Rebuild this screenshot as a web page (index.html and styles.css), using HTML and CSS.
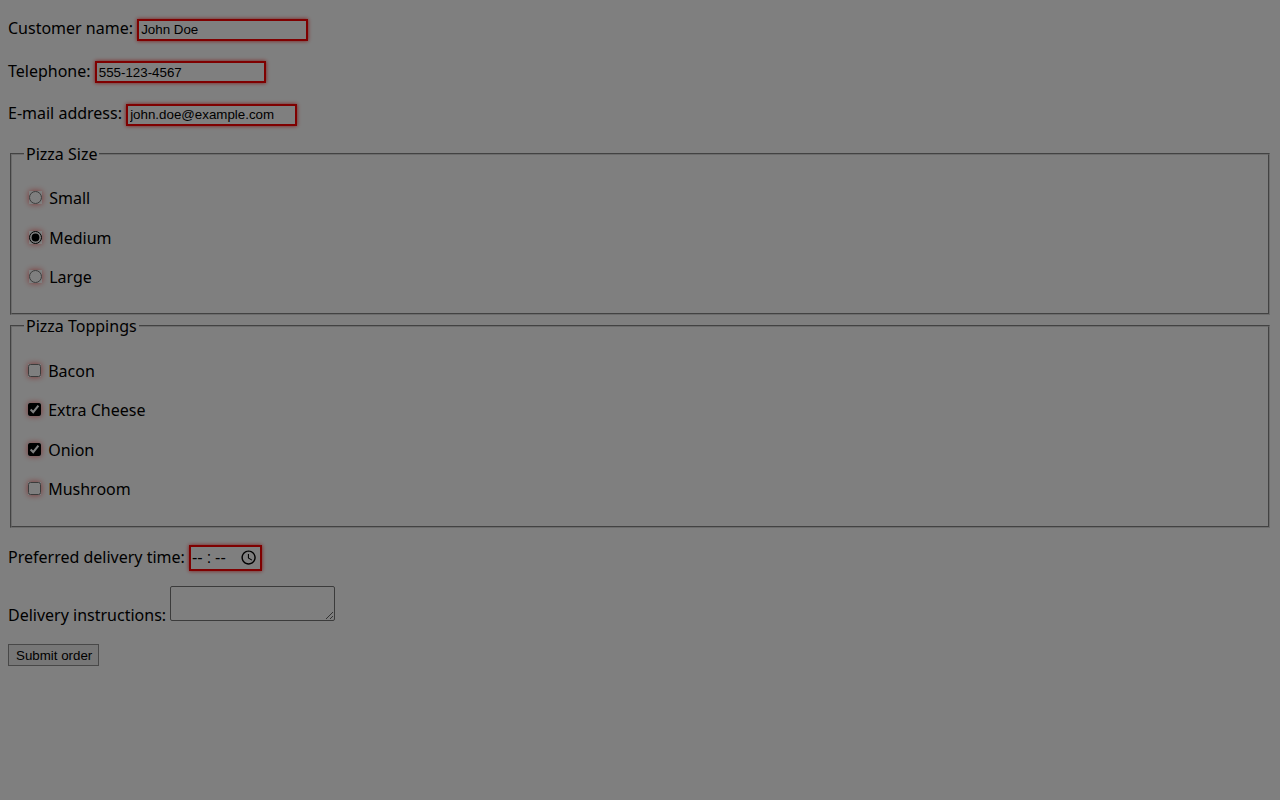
FILE: index.html
```html
<!DOCTYPE html>
<html>
<head>
<meta charset="utf-8">
<title>Pizza order</title>
<link rel="stylesheet" href="styles.css">
</head>
<body>
<form class="order">
  <p class="row"><label>Customer name: <input class="field" name="custname" value="John Doe"></label></p>
  <p class="row"><label>Telephone: <input class="field" type="tel" name="custtel" value="555-123-4567"></label></p>
  <p class="row"><label>E-mail address: <input class="field" type="email" name="custemail" value="john.doe@example.com"></label></p>
  <fieldset class="group">
    <legend class="group-title"> Pizza Size </legend>
    <p class="row"><label> <input class="choice" type="radio" name="size" value="small"> Small </label></p>
    <p class="row"><label> <input class="choice" type="radio" name="size" value="medium" checked> Medium </label></p>
    <p class="row"><label> <input class="choice" type="radio" name="size" value="large"> Large </label></p>
  </fieldset>
  <fieldset class="group">
    <legend class="group-title"> Pizza Toppings </legend>
    <p class="row"><label> <input class="choice" type="checkbox" name="topping" value="bacon"> Bacon </label></p>
    <p class="row"><label> <input class="choice" type="checkbox" name="topping" value="cheese" checked> Extra Cheese </label></p>
    <p class="row"><label> <input class="choice" type="checkbox" name="topping" value="onion" checked> Onion </label></p>
    <p class="row"><label> <input class="choice" type="checkbox" name="topping" value="mushroom"> Mushroom </label></p>
  </fieldset>
  <p class="row"><label>Preferred delivery time: <input class="field time" type="time" name="delivery"></label></p>
  <p class="row"><label>Delivery instructions: <textarea class="notes" name="comments"></textarea></label></p>
  <p class="row"><button class="submit" type="button">Submit order</button></p>
</form>
<div class="overlay"></div>
</body>
</html>
```

FILE: styles.css
```css
html {
  background: #ffffff;
}
body {
  margin: 0 8px 8px;
  font-family: "Noto Sans", sans-serif;
  font-size: 16px;
  color: #000;
}
.order {
  margin: 0;
}
.row {
  margin: 17px 0 15px;
  line-height: 22.4px;
}
.group {
  margin: 0 2px;
  padding: 5.6px 12px 10px;
  border: 2px groove #d8d8d8;
}
.group-title {
  padding: 0 2px;
}
.field {
  border: 2px solid #ff0000;
  box-shadow: 0 0 4px rgba(255, 0, 0, 0.8);
  width: 171px;
  height: 22px;
  margin: 0 0 2px;
  box-sizing: border-box;
  font-family: "Liberation Sans", Arial, sans-serif;
  font-size: 13.33px;
  padding: 1px 2px;
  vertical-align: baseline;
}
.field.time {
  width: 73px;
  height: 26px;
  font-size: 16px;
  padding: 1px 3px 1px 1px;
  margin-bottom: -2px;
}
.field.time::-webkit-datetime-edit-ampm-field {
  display: none;
}
.field.time::-webkit-datetime-edit-text {
  padding: 0 4px 0 3px;
}
.field.time::-webkit-datetime-edit-hour-field,
.field.time::-webkit-datetime-edit-minute-field {
  padding: 0 1px 0 0;
  font-size: 18px;
  letter-spacing: 2px;
}
.field.time::-webkit-calendar-picker-indicator {
  margin-left: auto;
  padding: 0;
}
.choice {
  accent-color: #000;
  box-shadow: 0 0 6px rgba(255, 0, 0, 0.6);
}
.notes {
  width: 165px;
  height: 35px;
  box-sizing: border-box;
  border: 1px solid #767676;
  border-radius: 2px;
  vertical-align: baseline;
}
.submit {
  height: 22px;
  padding: 1px 6px 1px 7px;
  border: 1px solid #909090;
  border-radius: 0;
  background: #efefef;
  font-family: "Liberation Sans", Arial, sans-serif;
  font-size: 13.33px;
  color: #000;
}
.overlay {
  position: fixed;
  inset: 0;
  background: rgba(0, 0, 0, 0.5);
}
```
